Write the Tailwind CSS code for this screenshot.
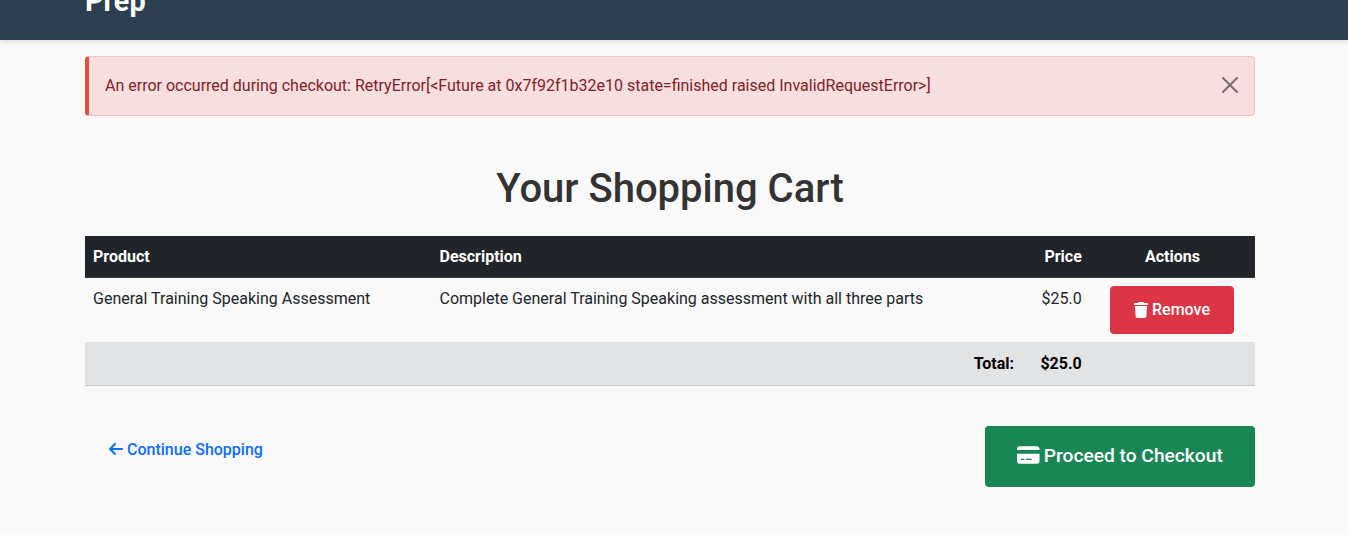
<!DOCTYPE html>
<html lang="en">
<head>
<meta charset="utf-8">
<title>Your Shopping Cart</title>
<script src="https://cdn.jsdelivr.net/npm/@tailwindcss/browser@4"></script>
</head>
<body class="h-[535px] overflow-hidden bg-[#f9f9f9] font-[Roboto,sans-serif] text-base leading-6 text-[#212529]">
<header class="h-10 overflow-hidden bg-[#2c3e50] shadow-[0_2px_5px_rgba(0,0,0,0.1)]">
  <div class="mx-auto w-[1170px] -translate-x-1 -mt-5 text-[28.8px] leading-[42px] font-bold text-white">Prep</div>
</header>
<main class="mx-auto w-[1170px] -translate-x-1 pt-4">
  <div class="flex h-[60px] items-center justify-between rounded-[4px] border border-l-4 border-[#f5c2c7] border-l-[#e74c3c] bg-[#f6dfdd] pl-4 pr-4 text-[#842029]">
    <p>An error occurred during checkout: RetryError[&lt;Future at 0x7f92f1b32e10 state=finished raised InvalidRequestError&gt;]</p>
    <svg class="mb-0.5 size-4 opacity-50" viewBox="0 0 16 16" fill="#000"><path d="M.293.293a1 1 0 0 1 1.414 0L8 6.586 14.293.293a1 1 0 1 1 1.414 1.414L9.414 8l6.293 6.293a1 1 0 0 1-1.414 1.414L8 9.414l-6.293 6.293a1 1 0 0 1-1.414-1.414L6.586 8 .293 1.707a1 1 0 0 1 0-1.414z"/></svg>
  </div>
  <h1 class="mt-[49px] text-center text-[40px] leading-[48px] font-medium text-[#333]">Your Shopping Cart</h1>
  <table class="mt-[23px] w-full table-fixed border-separate border-spacing-0">
    <colgroup><col class="w-[346.5px]"><col class="w-[590.5px]"><col class="w-[67.8px]"><col class="w-[165.2px]"></colgroup>
    <thead><tr class="h-[42px] bg-[#212529] text-white *:border-b *:border-[#373b3e]"><th class="px-2 text-left">Product</th><th class="px-2 text-left">Description</th><th class="px-2 text-right">Price</th><th class="px-2 text-center">Actions</th></tr></thead>
    <tbody>
      <tr class="h-16"><td class="px-2 pt-[9px] align-top">General Training Speaking Assessment</td><td class="px-2 pt-[9px] align-top">Complete General Training Speaking assessment with all three parts</td><td class="px-2 pt-[9px] text-right align-top">$25.0</td>
      <td class="py-2 pl-[20.2px] align-top"><button class="flex h-12 w-[124px] items-center justify-center gap-1 rounded-[4px] bg-[#dc3545] font-medium text-white"><svg class="mb-px h-4 w-[14px]" viewBox="0 0 448 512" fill="currentColor"><path d="M135.200 17.700L128 32H32C14.300 32 0 46.300 0 64S14.300 96 32 96H416c17.700 0 32-14.300 32-32s-14.300-32-32-32H320l-7.200-14.300C307.400 6.800 296.300 0 284.200 0H163.800c-12.100 0-23.200 6.800-28.600 17.700zM416 128H32L53.200 467c1.600 25.300 22.600 45 47.900 45H346.900c25.300 0 46.300-19.700 47.900-45L416 128z"/></svg>Remove</button></td></tr>
      <tr class="h-11 bg-[#e2e3e5] font-bold text-black *:border-b *:border-[#c6c7c8]"><td></td><td class="px-2 text-right">Total:</td><td class="px-2 text-right">$25.0</td><td></td></tr>
    </tbody>
  </table>
  <div class="mt-10 flex items-start justify-between">
    <a class="flex h-12 items-center gap-1 px-6 font-medium text-[#0d6efd]"><svg class="mb-0.5 h-4 w-[14px]" viewBox="0 0 448 512" fill="currentColor"><path d="M9.400 233.400c-12.500 12.500-12.500 32.800 0 45.300l160 160c12.500 12.500 32.800 12.500 45.300 0s12.500-32.800 0-45.300L109.200 288H416c17.700 0 32-14.300 32-32s-14.300-32-32-32H109.300L214.600 118.600c12.500-12.500 12.500-32.800 0-45.300s-32.800-12.500-45.300 0l-160 160z"/></svg>Continue Shopping</a>
    <button class="flex h-[61px] w-[270px] items-center justify-center gap-1 rounded-[4px] bg-[#198754] pb-0.5 text-[19.2px] font-medium text-white"><svg class="mb-px h-5 w-[22.5px]" viewBox="0 0 576 512" fill="currentColor"><path d="M64 32C28.700 32 0 60.700 0 96v32H576V96c0-35.300-28.700-64-64-64H64zM576 224H0V416c0 35.300 28.700 64 64 64H512c35.300 0 64-28.700 64-64V224zM112 352h64c8.800 0 16 7.200 16 16s-7.200 16-16 16H112c-8.800 0-16-7.200-16-16s7.200-16 16-16zm112 16c0-8.800 7.200-16 16-16H368c8.800 0 16 7.200 16 16s-7.200 16-16 16H240c-8.800 0-16-7.200-16-16z"/></svg>Proceed to Checkout</button>
  </div>
</main>
</body>
</html>
